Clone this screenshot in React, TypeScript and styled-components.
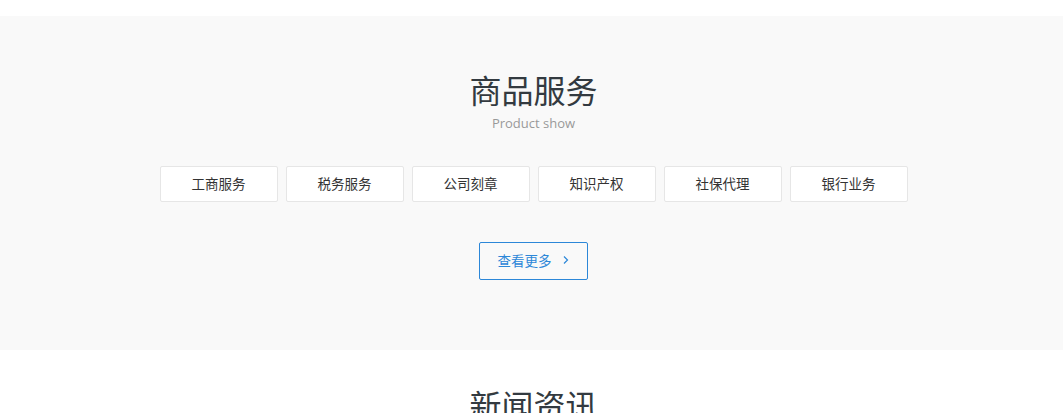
import { FC } from 'react';
import styled, { createGlobalStyle } from 'styled-components';

const tabs = ['工商服务', '税务服务', '公司刻章', '知识产权', '社保代理', '银行业务'];

const GlobalStyle = createGlobalStyle`
    html, body {
        margin: 0;
        padding: 0;
        background: #fff;
        font-family: "Open Sans", "Noto Sans CJK SC", sans-serif;
        color: #333;
    }
`;

const App: FC = () => {
    return (
        <Page>
            <GlobalStyle />
            <Products>
                <Title>商品服务</Title>
                <SubTitle>Product show</SubTitle>
                <TabRow>
                    {tabs.map((t) => (
                        <Tab key={t}>{t}</Tab>
                    ))}
                </TabRow>
                <MoreButton>
                    查看更多
                    <Arrow viewBox="0 0 8 12" aria-hidden="true">
                        <path d="M2 2.5 L5.5 6 L2 9.5" />
                    </Arrow>
                </MoreButton>
            </Products>
            <News>
                <Title>新闻资讯</Title>
            </News>
        </Page>
    );
};

const Page = styled.div`
    padding-top: 16px;
`;

const Products = styled.section`
    background-color: #f9f9f9;
    padding: 53px 0 70px 4px;
    display: flex;
    flex-direction: column;
    align-items: center;
`;

const Title = styled.h2`
    margin: 0;
    font-size: 32px;
    line-height: 40px;
    font-weight: 400;
    color: #333a40;
    font-family: "Noto Sans CJK SC", sans-serif;
`;

const SubTitle = styled.p`
    margin: 4px 0 0;
    font-size: 13px;
    line-height: 20px;
    color: #999;
`;

const TabRow = styled.div`
    display: flex;
    gap: 8px;
    margin-top: 33px;
`;

const Tab = styled.div`
    width: 118px;
    height: 36px;
    box-sizing: border-box;
    padding-bottom: 2px;
    background: #fff;
    border: 1px solid #e6e6e6;
    border-radius: 2px;
    display: flex;
    align-items: center;
    justify-content: center;
    font-size: 13.5px;
    color: #333;
    font-family: "Noto Sans CJK SC", sans-serif;
`;

const MoreButton = styled.div`
    margin-top: 40px;
    width: 109px;
    height: 38px;
    box-sizing: border-box;
    padding-bottom: 2px;
    border: 1px solid #2c87d8;
    border-radius: 2px;
    display: flex;
    align-items: center;
    justify-content: center;
    gap: 10px;
    font-size: 13.5px;
    color: #2c87d8;
    font-family: "Noto Sans CJK SC", sans-serif;
    cursor: pointer;
`;

const Arrow = styled.svg`
    width: 8px;
    height: 12px;
    fill: none;
    stroke: #2c87d8;
    stroke-width: 1.2;
`;

const News = styled.section`
    background: #fff;
    padding: 34px 0 40px 4px;
    display: flex;
    flex-direction: column;
    align-items: center;
`;

export default App;
